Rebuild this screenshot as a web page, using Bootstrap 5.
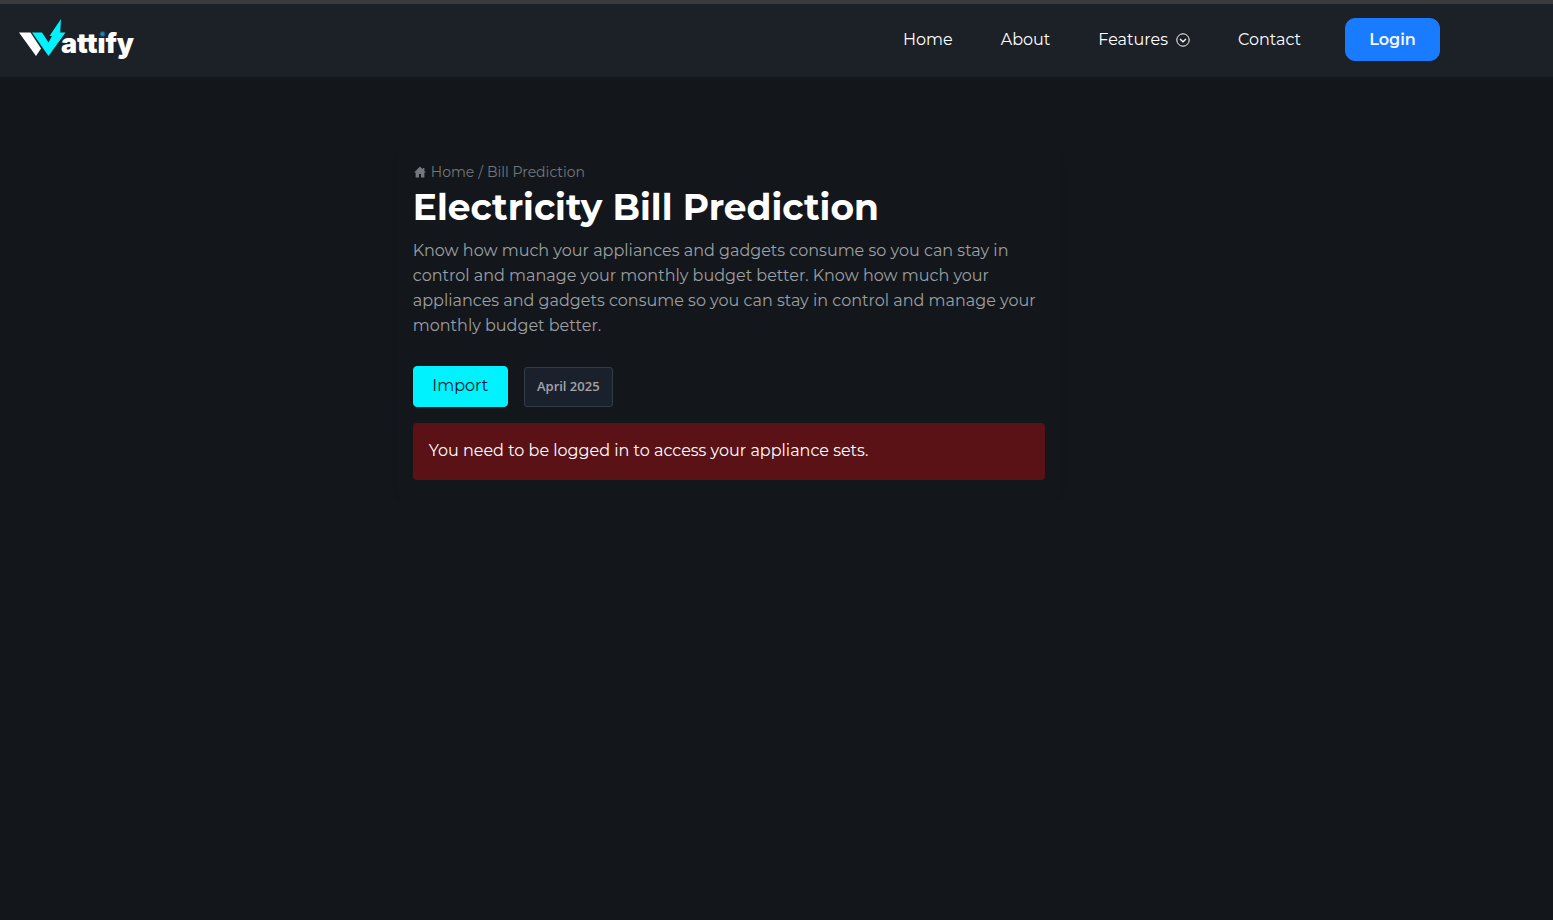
<!DOCTYPE html>
<html lang="en" data-bs-theme="dark">
<head>
<meta charset="utf-8">
<meta name="viewport" content="width=device-width, initial-scale=1">
<title>Wattify - Electricity Bill Prediction</title>
<link href="https://cdn.jsdelivr.net/npm/bootstrap@5.3.0/dist/css/bootstrap.min.css" rel="stylesheet">
<style>
  body { background: #13171b; color: #fff; font-family: Montserrat, Inter, sans-serif; font-size: 16px; line-height: 25px; }
  .site-header { background: #1c2027; border-top: 4px solid #3b3b3d; min-height: 77px; padding: 0 113px 3px 18px; }
  .site-header .nav-link { color: #fff; padding: 2px 0 0; line-height: 24px; }
  .login-btn { --bs-btn-bg: #197bff; --bs-btn-border-color: #197bff; --bs-btn-color: #f4f8ff; width: 95px; height: 43px; border-radius: 10px; font-size: 16px; font-weight: 600; line-height: 24px; padding: 2px 0 0; margin-left: -4px; }
  .page-main { margin-left: 25.55%; margin-top: 69px; max-width: 664px; padding: 16px 16px 20px; border-radius: 12px; box-shadow: 0 4px 6px rgba(0, 0, 0, .03); }
  .crumbs, .crumbs a { color: #74777b; font-size: 14px; line-height: 20px; }
  .page-title { font-size: 36px; font-weight: 700; line-height: 44px; margin: 3px 0 9px; }
  .intro { color: #9c9fa3; margin-bottom: 28px; }
  .import-btn { --bs-btn-bg: #00f2ff; --bs-btn-border-color: #00f2ff; --bs-btn-color: #10202a; width: 95px; height: 41px; border-radius: 4px; font-size: 16px; padding: 0 0 2px; }
  .month-btn { --bs-btn-bg: #1b212c; --bs-btn-border-color: #343c49; --bs-btn-color: #a2a4a8; width: 89px; height: 40px; border-radius: 3px; font-family: "Open Sans", sans-serif; font-size: 13px; font-weight: 600; padding: 0; }
  .login-note { background: #5a1217; color: #fff; border: 0; border-radius: 4px; padding: 15px 16px 17px; }
</style>
</head>
<body>
<header class="site-header d-flex flex-wrap align-items-center justify-content-between">
  <a href="#" aria-label="Wattify">
    <svg class="d-block" width="120" height="48" viewBox="18 15 120 48" aria-hidden="true">
      <path fill="#fff" d="M19 32.500h11.500l10.500 16-5 7.500z"/>
      <path fill="#00f2ff" d="M32 32.500h10l6.500 10 3.500-6.500h-2.500L61 19l-.800 13.500H65.500L48.500 56z"/>
      <text x="61" y="52.500" fill="#fff" font-family="Inter, sans-serif" font-size="27" font-weight="900">attify</text>
      <path fill="#1c2027" d="M97 29h9v8h-9z"/>
      <circle cx="102.500" cy="34" r="3" fill="#1c86bd" opacity=".4"/>
      <circle cx="102.500" cy="34" r="2" fill="#1c86bd"/>
    </svg>
  </a>
  <nav class="d-flex flex-wrap align-items-center gap-5" aria-label="Main">
    <a class="nav-link" href="#">Home</a>
    <a class="nav-link" href="#">About</a>
    <a class="nav-link d-flex align-items-center gap-2" href="#">Features
      <svg width="14" height="14" viewBox="0 0 14 14" fill="none" stroke="#fff" aria-hidden="true"><circle cx="7" cy="7" r="6.200"/><path d="m4 6 3 2.800L10 6" stroke-width="1.300"/></svg>
    </a>
    <a class="nav-link" href="#">Contact</a>
    <button class="btn login-btn" type="button">Login</button>
  </nav>
</header>
<main class="page-main">
  <nav class="crumbs d-flex align-items-center gap-1" aria-label="Breadcrumb">
    <svg width="14" height="14" viewBox="0 0 14 14" fill="#74777b" aria-hidden="true"><path d="M7 1.500 1 7.500h1.600v5H6V9h2v3.500h3.400v-5H13l-1.600-1.600V3H9.800v1.300z"/></svg>
    <a class="text-decoration-none" href="#">Home</a><span>/</span><span>Bill Prediction</span>
  </nav>
  <h1 class="page-title">Electricity Bill Prediction</h1>
  <p class="intro">Know how much your appliances and gadgets consume so you can stay in control and manage your monthly budget better. Know how much your appliances and gadgets consume so you can stay in control and manage your monthly budget better.</p>
  <div class="d-flex align-items-end gap-3 mb-3">
    <button class="btn import-btn" type="button">Import</button>
    <button class="btn month-btn" type="button">April 2025</button>
  </div>
  <div class="alert login-note mb-0" role="alert">You need to be logged in to access your appliance sets.</div>
</main>
<script src="https://cdn.jsdelivr.net/npm/bootstrap@5.3.0/dist/js/bootstrap.bundle.min.js"></script>
</body>
</html>
